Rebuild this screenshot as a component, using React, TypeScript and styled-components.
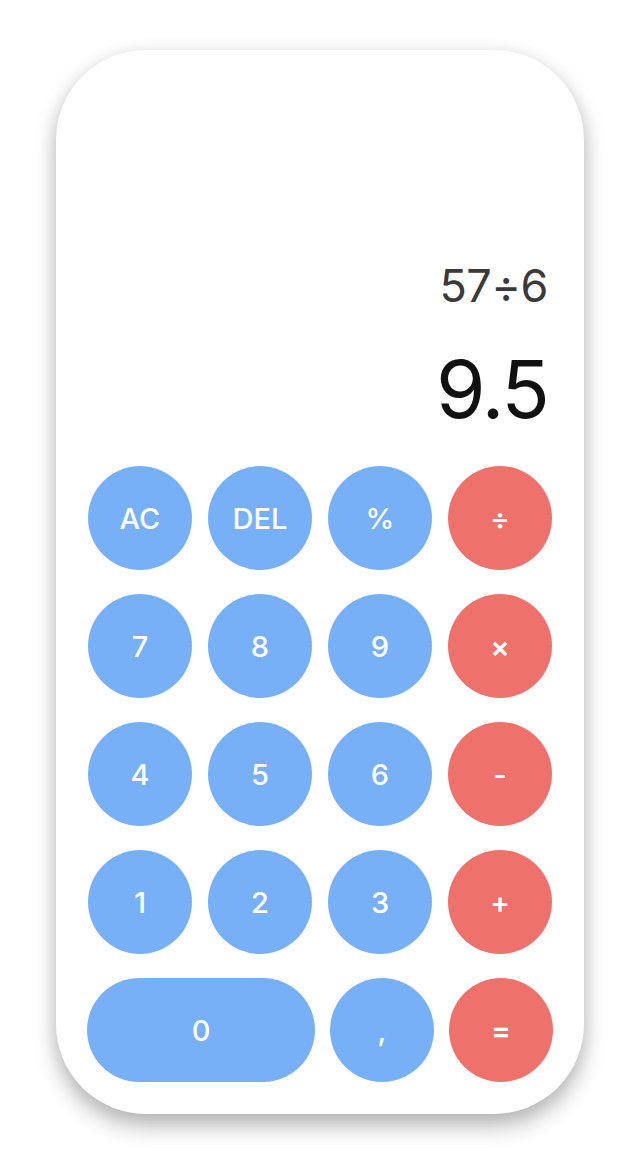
import React from "react";
import styled, { createGlobalStyle } from "styled-components";

const Global = createGlobalStyle`
  html, body { margin: 0; padding: 0; background: #ffffff; }
  body { font-family: "Inter", "Noto Sans", sans-serif; }
`;

const Page = styled.div`
  display: flex;
  justify-content: center;
  padding-top: 50px;
  height: 1160px;
  box-sizing: border-box;
`;

const Card = styled.div`
  width: 528px;
  height: 1064px;
  box-sizing: border-box;
  background: #ffffff;
  border-radius: 90px;
  box-shadow: 0 12px 22px rgba(0, 0, 0, 0.28), 0 0 18px rgba(0, 0, 0, 0.06);
  padding: 32px;
  display: flex;
  flex-direction: column;
`;

const Display = styled.div`
  flex: 1;
  display: flex;
  flex-direction: column;
  justify-content: flex-end;
  align-items: flex-end;
  padding: 0 4px 37px 0;
`;

const Expression = styled.div`
  font-size: 45px;
  font-weight: 400;
  color: #3a3a3a;
  line-height: 1;
  letter-spacing: -0.5px;
  margin-bottom: 41px;
`;

const Result = styled.div`
  font-size: 80px;
  font-weight: 400;
  color: #111111;
  line-height: 1;
  letter-spacing: -2px;
`;

const Keypad = styled.div`
  display: flex;
  flex-direction: column;
  gap: 24px;
`;

const Row = styled.div<{ $last?: boolean }>`
  display: grid;
  grid-template-columns: ${(p) => (p.$last ? "228px 104px 104px" : "repeat(4, 104px)")};
  column-gap: ${(p) => (p.$last ? "15px" : "16px")};
  margin-left: ${(p) => (p.$last ? "-1px" : "0")};
`;

const Key = styled.button<{ $op?: boolean }>`
  height: 104px;
  border: none;
  border-radius: 52px;
  background: ${(p) => (p.$op ? "#ee716b" : "#78b0f8")};
  color: #ffffff;
  font-family: "Inter", "Noto Sans", sans-serif;
  font-size: 29px;
  font-weight: ${(p) => (p.$op ? 600 : 500)};
  display: flex;
  align-items: center;
  justify-content: center;
  padding: 0;
  cursor: pointer;
`;

const rows: { label: string; op?: boolean }[][] = [
  [{ label: "AC" }, { label: "DEL" }, { label: "%" }, { label: "÷", op: true }],
  [{ label: "7" }, { label: "8" }, { label: "9" }, { label: "×", op: true }],
  [{ label: "4" }, { label: "5" }, { label: "6" }, { label: "-", op: true }],
  [{ label: "1" }, { label: "2" }, { label: "3" }, { label: "+", op: true }],
];

export default function App() {
  return (
    <>
      <Global />
      <Page>
        <Card>
          <Display>
            <Expression>57÷6</Expression>
            <Result>9.5</Result>
          </Display>
          <Keypad>
            {rows.map((r, i) => (
              <Row key={i}>
                {r.map((k) => (
                  <Key key={k.label} $op={k.op}>
                    {k.label}
                  </Key>
                ))}
              </Row>
            ))}
            <Row $last>
              <Key>0</Key>
              <Key>,</Key>
              <Key $op>=</Key>
            </Row>
          </Keypad>
        </Card>
      </Page>
    </>
  );
}
